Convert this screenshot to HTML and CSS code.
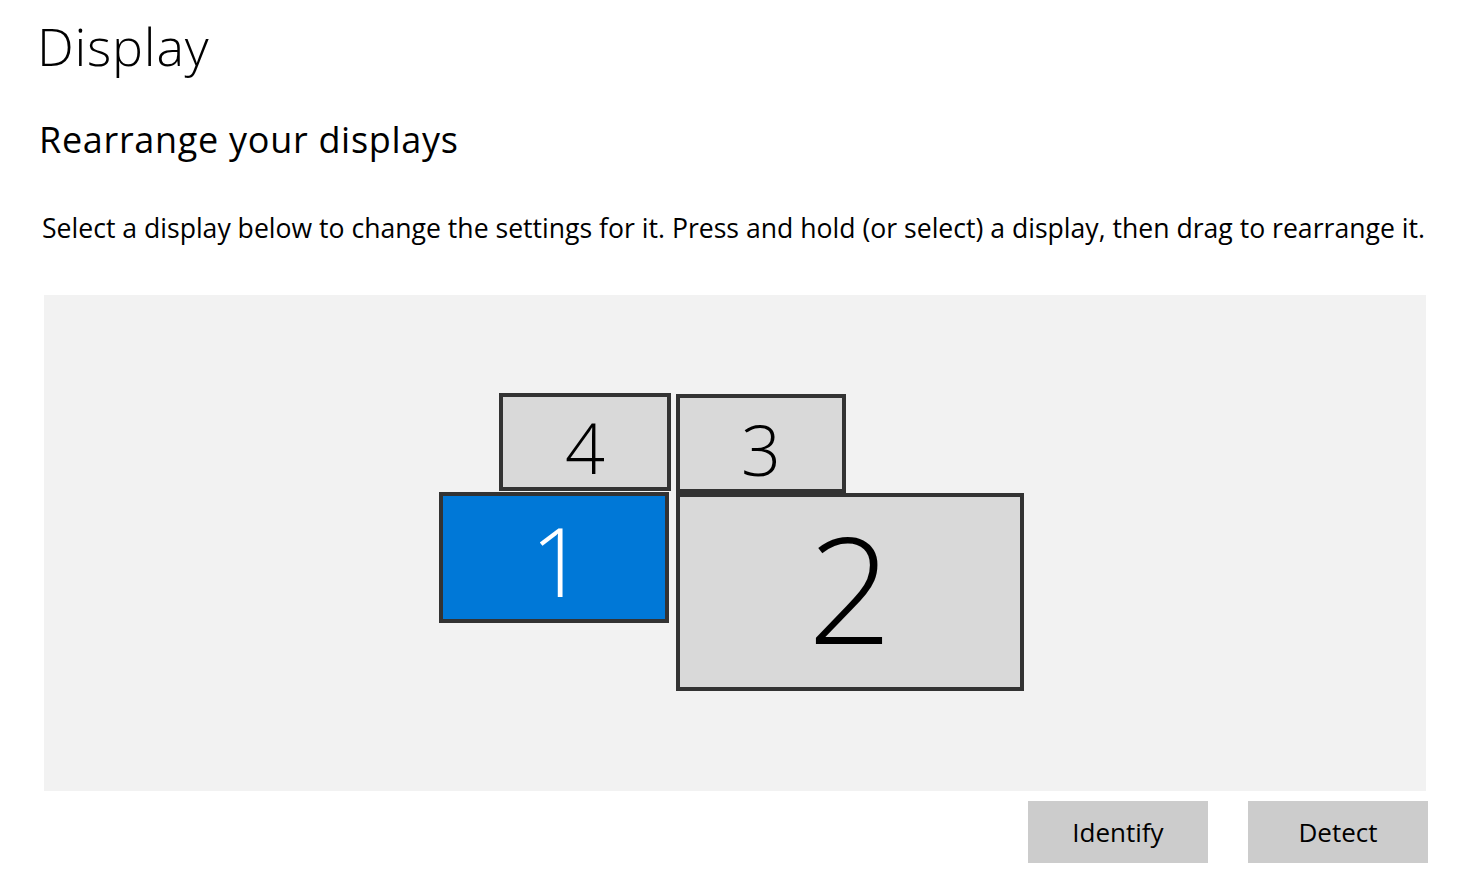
FILE: index.html
```html
<!DOCTYPE html>
<html lang="en">
<head>
<meta charset="utf-8">
<title>Display</title>
<link rel="stylesheet" href="styles.css">
</head>
<body>
<main class="page">
  <h1 class="title">Display</h1>
  <h2 class="subtitle">Rearrange your displays</h2>
  <p class="desc">Select a display below to change the settings for it. Press and hold (or select) a display, then drag to rearrange it.</p>
  <section class="canvas">
    <div class="mon mon-4">4</div>
    <div class="mon mon-3">3</div>
    <div class="mon mon-1 selected">1</div>
    <div class="mon mon-2">2</div>
  </section>
  <div class="actions">
    <button class="btn">Identify</button>
    <button class="btn">Detect</button>
  </div>
</main>
</body>
</html>
```
FILE: styles.css
```css
html, body {
  margin: 0;
  padding: 0;
  background: #ffffff;
}
body {
  font-family: "Open Sans", "Noto Sans", "Liberation Sans", sans-serif;
  color: #000;
}
.page {
  display: flex;
  flex-direction: column;
  padding: 0 37px 0 37px;
  width: 1465px;
  box-sizing: border-box;
}
.title {
  margin: 10px 0 0 0;
  font-size: 52px;
  font-weight: 300;
  line-height: 72px;
  letter-spacing: 0.8px;
}
.subtitle {
  margin: 34px 0 0 2px;
  font-size: 36px;
  font-weight: 400;
  line-height: 48px;
  letter-spacing: 0.7px;
}
.desc {
  margin: 46px 0 0 5px;
  font-size: 26.6px;
  line-height: 36px;
  white-space: nowrap;
}
.canvas {
  position: relative;
  margin: 49px 0 0 7px;
  width: 1382px;
  height: 496px;
  background: #f2f2f2;
}
.mon {
  position: absolute;
  box-sizing: border-box;
  border: 4px solid #333333;
  background: #d9d9d9;
  display: flex;
  align-items: center;
  justify-content: center;
  font-weight: 300;
  color: #000;
}
.mon-4 { left: 455px; top: 98px; width: 172px; height: 98px; font-size: 70px; padding-top: 10px; }
.mon-3 { left: 632px; top: 99px; width: 170px; height: 99px; font-size: 70px; padding-top: 10px; }
.mon-1 { left: 395px; top: 197px; width: 230px; height: 131px; font-size: 96px; padding-top: 4px; padding-left: 8px; }
.mon-2 { left: 632px; top: 198px; width: 348px; height: 198px; font-size: 148px; padding-bottom: 12px; }
.mon.selected {
  background: #0078d7;
  color: #ffffff;
}
.actions {
  display: flex;
  justify-content: flex-end;
  gap: 40px;
  margin: 10px 0 0 0;
}
.btn {
  width: 180px;
  height: 62px;
  border: none;
  background: #cccccc;
  font-family: "Open Sans", "Noto Sans", "Liberation Sans", sans-serif;
  font-size: 26px;
  color: #000;
  padding: 0;
}
```
